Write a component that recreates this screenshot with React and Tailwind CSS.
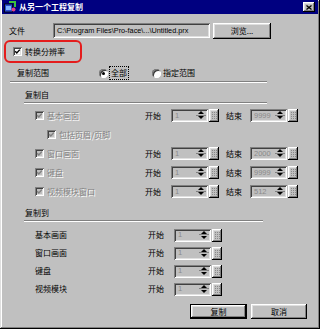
import React from "react";

const RAISED = "shadow-[inset_-1px_-1px_0_#000,inset_1px_1px_0_#fff,inset_-2px_-2px_0_#808080,inset_2px_2px_0_#dfdfdf]";
const SUNKEN = "shadow-[inset_1px_1px_0_#808080,inset_-1px_-1px_0_#fff,inset_2px_2px_0_#404040,inset_-2px_-2px_0_#dfdfdf]";

function Check({ disabled }) {
  return (
    <div
      className={
        disabled
          ? "w-[9px] h-[9px] shrink-0 flex items-center justify-center bg-[#c0c0c0] shadow-[inset_1px_1px_0_#808080,inset_-1px_-1px_0_#fff,inset_2px_2px_0_#404040,inset_-2px_-2px_0_#dfdfdf]"
          : "w-[9px] h-[9px] shrink-0 flex items-center justify-center bg-white shadow-[inset_1px_1px_0_#808080,inset_-1px_-1px_0_#fff,inset_2px_2px_0_#404040,inset_-2px_-2px_0_#dfdfdf]"
      }
    >
      <svg width="7" height="7" viewBox="0 0 7 7">
        <path d="M1.2 3.2 L2.8 4.9 L5.8 1.6" stroke={disabled ? "#808080" : "#000"} strokeWidth="1.4" fill="none" />
      </svg>
    </div>
  );
}

function Radio({ on }) {
  return (
    <div className="w-[9px] h-[9px] shrink-0 rounded-full bg-white flex items-center justify-center shadow-[inset_1px_1px_0_#808080,inset_-1px_-1px_0_#fff,inset_2px_2px_0_#404040]">
      {on ? <div className="w-[3px] h-[3px] rounded-full bg-black" /> : null}
    </div>
  );
}

function Spin({ value }) {
  return (
    <div className="flex items-center">
      <div className={`w-[37px] h-[13px] bg-[#c0c0c0] flex items-center pl-[4px] pr-[2px] ${SUNKEN}`}>
        <span className="flex-1 text-[7.5px] leading-none font-['Liberation_Sans',sans-serif] text-[#8a8a8a]">{value}</span>
        <div className="w-[10px] h-[9px] flex flex-col bg-[#c0c0c0]">
          <div className="h-[4.5px] flex items-center justify-center border-b border-[#808080]">
            <svg width="6" height="3" viewBox="0 0 6 3"><path d="M0 3 L3 0 L6 3 Z" fill="#000" /></svg>
          </div>
          <div className="h-[4.5px] flex items-center justify-center">
            <svg width="6" height="3" viewBox="0 0 6 3"><path d="M0 0 L6 0 L3 3 Z" fill="#000" /></svg>
          </div>
        </div>
      </div>
      <div className={`w-[10px] h-[13px] ml-[1px] bg-[#c0c0c0] flex items-center justify-center ${RAISED}`}>
        <svg width="5" height="7" viewBox="0 0 5 7">
          <path d="M0.5 0 V7 M2.5 0 V7 M4.5 0 V7" stroke="#8a8a8a" strokeWidth="1" strokeDasharray="1 1" />
        </svg>
      </div>
    </div>
  );
}

function Sep({ cls }) {
  return <div className={`h-[2px] border-t border-[#808080] border-b border-b-white ${cls}`} />;
}

function FromRow({ label, end }) {
  return (
    <div className="h-[19px] flex items-center pl-[35px]">
      <Check disabled />
      <div className="w-[101px] pl-[3px] text-[#808080] [text-shadow:1px_1px_0_#fff]">{label}</div>
      <div className="w-[26px]">开始</div>
      <Spin value="1" />
      <div className="w-[24px] ml-[7px]">结束</div>
      <Spin value={end} />
    </div>
  );
}

function ToRow({ label }) {
  return (
    <div className="h-[18px] flex items-center pl-[35px]">
      <div className="w-[113px]">{label}</div>
      <div className="w-[26px]">开始</div>
      <Spin value="1" />
    </div>
  );
}

export default function App() {
  return (
    <div className="w-[320px] h-[329px] bg-[#c0c0c0] relative text-[8px] leading-none text-black font-['Noto_Sans_CJK_SC',sans-serif] shadow-[inset_-1px_-1px_0_#000,inset_1px_1px_0_#dfdfdf,inset_-2px_-2px_0_#808080,inset_2px_2px_0_#fff] overflow-hidden">
      {/* title bar */}
      <div className="mx-[2px] h-[14px] bg-[#000080] flex items-center pl-[2px] pr-[3px]">
        <svg width="12" height="12" viewBox="0 0 12 12" className="shrink-0">
          <rect x="0.5" y="3" width="8" height="8" fill="#2a4bd0" stroke="#000" strokeWidth="0.8" />
          <rect x="2" y="5" width="5" height="4" fill="#7fb3ff" />
          <path d="M5 1 L11 1 L11 6" stroke="#3cc03c" strokeWidth="2" fill="none" />
          <circle cx="9.5" cy="8.5" r="2" fill="#e0408a" />
        </svg>
        <span className="ml-[3px] text-white font-bold text-[8px]">从另一个工程复制</span>
        <div className="flex-1" />
        <div className={`w-[12px] h-[10px] bg-[#c0c0c0] flex items-center justify-center ${RAISED}`}>
          <svg width="6" height="5" viewBox="0 0 6 5"><path d="M0.5 0.5 L5.5 4.5 M5.5 0.5 L0.5 4.5" stroke="#000" strokeWidth="1.3" /></svg>
        </div>
      </div>

      {/* file row */}
      <div className="mt-[8px] h-[17px] flex items-center">
        <div className="w-[53px] pl-[9px]">文件</div>
        <div className={`w-[157px] h-[15px] flex items-center pl-[4px] bg-[#c0c0c0] whitespace-nowrap overflow-hidden ${SUNKEN}`}>
          <span className="text-[7.3px] font-['Liberation_Sans',sans-serif] text-black">C:\Program Files\Pro-face\...\Untitled.prx</span>
        </div>
        <div className={`ml-[3px] w-[58px] h-[16px] flex items-center justify-center bg-[#c0c0c0] ${RAISED}`}>浏览...</div>
      </div>

      {/* highlighted checkbox */}
      <div className="mt-[1px] ml-[4px] w-[78px] h-[23px] border-2 border-[#e41c1c] rounded-[6px] flex items-center pl-[7px]">
        <Check />
        <span className="ml-[3px]">转换分辨率</span>
      </div>

      {/* range row */}
      <div className="mt-[3px] h-[14px] flex items-center">
        <div className="w-[99px] pl-[17px]">复制范围</div>
        <Radio on />
        <div className="ml-[1px] px-[1px] py-[2px] border border-dotted border-black">全部</div>
        <div className="w-[23px]" />
        <Radio />
        <div className="ml-[2px]">指定范围</div>
      </div>

      <Sep cls="mt-[1px] ml-[10px] w-[257px]" />

      <div className="mt-[5px] h-[14px] flex items-center pl-[25px]">复制自</div>
      <Sep cls="ml-[24px] w-[243px]" />

      <div className="mt-[2px]">
        <FromRow label="基本画面" end="9999" />
        <div className="h-[19px] flex items-center pl-[47px]">
          <Check disabled />
          <div className="pl-[3px] text-[#808080] [text-shadow:1px_1px_0_#fff]">包括页眉/页脚</div>
        </div>
        <FromRow label="窗口画面" end="2000" />
        <FromRow label="键盘" end="9999" />
        <FromRow label="视频模块窗口" end="512" />
      </div>

      <div className="mt-[5px] h-[14px] flex items-center pl-[25px]">复制到</div>
      <Sep cls="ml-[24px] w-[239px]" />

      <div className="mt-[4px]">
        <ToRow label="基本画面" />
        <ToRow label="窗口画面" />
        <ToRow label="键盘" />
        <ToRow label="视频模块" />
      </div>

      {/* buttons */}
      <div className="mt-[6px] flex items-center pl-[190px]">
        <div className="w-[57px] h-[15px] border border-black">
          <div className={`w-full h-full flex items-center justify-center bg-[#c0c0c0] ${RAISED}`}>复制</div>
        </div>
        <div className={`ml-[4px] w-[56px] h-[15px] flex items-center justify-center bg-[#c0c0c0] ${RAISED}`}>取消</div>
      </div>
    </div>
  );
}
